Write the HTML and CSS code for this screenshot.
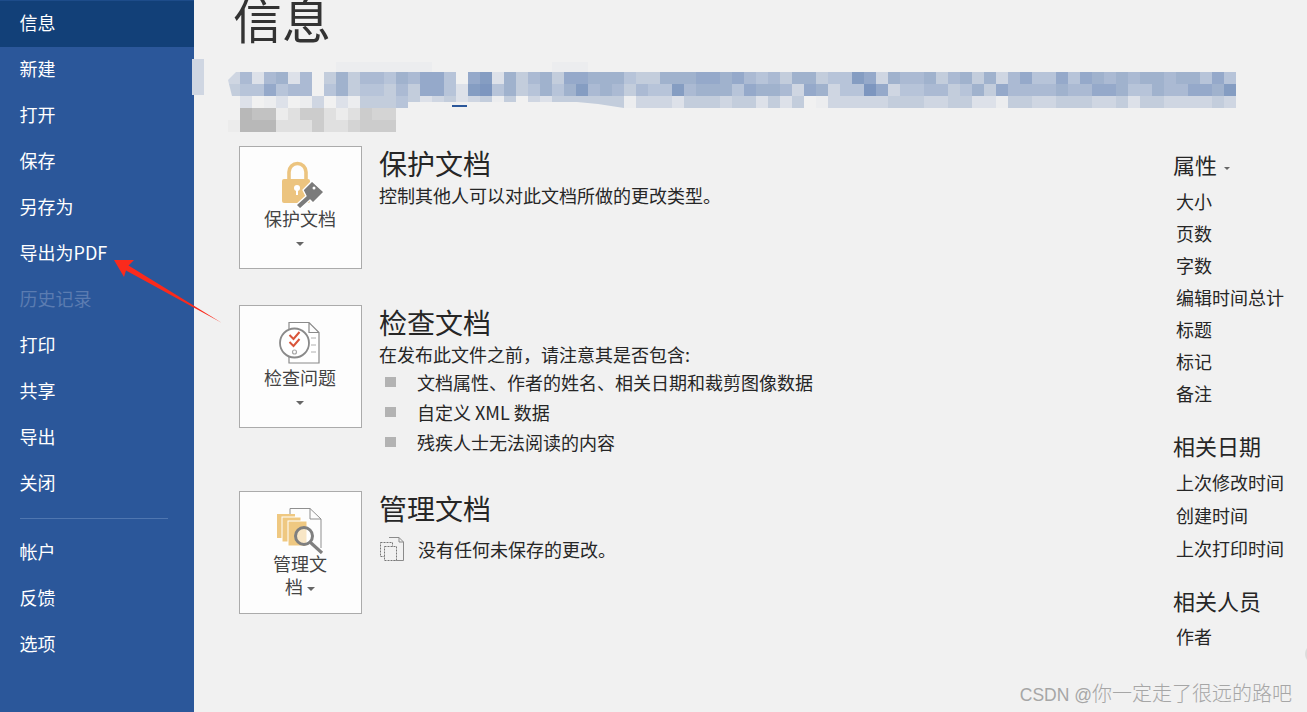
FILE: index.html
```html
<!DOCTYPE html>
<html lang="zh-CN">
<head>
    <meta charset="UTF-8">
    <title>信息</title>
    <link rel="stylesheet" href="styles.css">
</head>
<body>
    <nav class="sidebar">
        <a class="nav-item active">信息</a>
        <a class="nav-item">新建</a>
        <a class="nav-item">打开</a>
        <a class="nav-item">保存</a>
        <a class="nav-item">另存为</a>
        <a class="nav-item">导出为PDF</a>
        <a class="nav-item disabled">历史记录</a>
        <a class="nav-item">打印</a>
        <a class="nav-item">共享</a>
        <a class="nav-item">导出</a>
        <a class="nav-item">关闭</a>
        <div class="nav-divider"></div>
        <a class="nav-item">帐户</a>
        <a class="nav-item">反馈</a>
        <a class="nav-item">选项</a>
    </nav>

    <main class="content">
        <div class="back-tab"></div>
        <h1 class="page-title">信息</h1>

        <!-- pixelated file path -->
        <div class="mosaic" id="mosaic">
            <div class="mosaic-faint" data-rows="faint"></div>
            <div class="mosaic-blue" data-rows="blue"></div>
            <div class="mosaic-gray" data-rows="gray"></div>
            <div class="mosaic-cut"></div>
            <div class="path-link"></div>
        </div>

        <div class="columns">
            <div class="sections">
                <section class="section">
                    <div class="tile">
                        <svg class="tile-icon" viewBox="0 0 48 48">
                            <path d="M12 18V11a8.5 8.5 0 0 1 17 0V18" fill="none" stroke="#ecc47f" stroke-width="3.6"/>
                            <rect x="5" y="18" width="28" height="24" rx="2" fill="#ecc47f"/>
                            <circle cx="20" cy="27" r="3" fill="#fff"/>
                            <rect x="19" y="27" width="2" height="7" fill="#fff"/>
                            <path d="M35 20L47 31 36 42 33 39 23 48 19 44 29 35 26 29Z" fill="#7b7b7b" stroke="#fff" stroke-width="1.4" stroke-linejoin="round"/>
                            <circle cx="37" cy="27" r="1.5" fill="#fff"/>
                        </svg>
                        <div class="tile-label">保护文档<br><span class="caret"></span></div>
                    </div>
                    <div class="info">
                        <h2 class="info-title">保护文档</h2>
                        <p class="info-text">控制其他人可以对此文档所做的更改类型。</p>
                    </div>
                </section>

                <section class="section">
                    <div class="tile">
                        <svg class="tile-icon" viewBox="0 0 48 48">
                            <path d="M12 2.500H32L42 12.500V43H12Z M32 2.500V12.500H42" fill="#fff" stroke="#8a8a8a" stroke-width="1.200"/>
                            <path d="M34 18h5M34 25h5M34 32h5" stroke="#b0b0b0" stroke-width="1"/>
                            <circle cx="17.500" cy="23" r="14.500" fill="#fff" stroke="#8a8a8a" stroke-width="1.800"/>
                            <path d="M12.500 15l4 4 6-7M12.500 22l4 4 6-7" fill="none" stroke="#d9553a" stroke-width="2"/>
                            <circle cx="17.500" cy="32" r="2" fill="#fff" stroke="#a8a8a8" stroke-width="1.200"/>
                        </svg>
                        <div class="tile-label">检查问题<br><span class="caret"></span></div>
                    </div>
                    <div class="info">
                        <h2 class="info-title">检查文档</h2>
                        <p class="info-text">在发布此文件之前，请注意其是否包含:</p>
                        <ul class="bullets">
                            <li>文档属性、作者的姓名、相关日期和裁剪图像数据</li>
                            <li>自定义 XML 数据</li>
                            <li>残疾人士无法阅读的内容</li>
                        </ul>
                    </div>
                </section>

                <section class="section">
                    <div class="tile">
                        <svg class="tile-icon" viewBox="0 0 48 48">
                            <path d="M13 8V2.500H33L44 13V42" fill="none" stroke="#8f8f8f" stroke-width="1"/>
                            <path d="M33 2.500V13H44" fill="none" stroke="#8f8f8f" stroke-width="1"/>
                            <rect x="0" y="8" width="18" height="24" fill="#efc881"/>
                            <rect x="5" y="11" width="19" height="25" fill="#efc881" stroke="#fff" stroke-width="1"/>
                            <rect x="11" y="15" width="19" height="25" fill="#efc881" stroke="#fff" stroke-width="1"/>
                            <path d="M33.500 36.500L45 47" stroke="#7f7f7f" stroke-width="3.200"/>
                            <circle cx="27" cy="30" r="8.500" fill="#fff" fill-opacity=".55" stroke="#7f7f7f" stroke-width="3"/>
                        </svg>
                        <div class="tile-label">管理文<br>档 <span class="caret"></span></div>
                    </div>
                    <div class="info">
                        <h2 class="info-title">管理文档</h2>
                        <p class="info-text info-row">
                            <svg class="small-doc" viewBox="0 0 24 24">
                                <path d="M9 .500H19L23.500 5V23.500H13" fill="none" stroke="#8a8a8a" stroke-width="1"/>
                                <path d="M19 .500V5H23.500" fill="none" stroke="#8a8a8a" stroke-width="1"/>
                                <rect x=".500" y="5.500" width="12" height="14" fill="#f1f1f1" stroke="#777" stroke-width="1" stroke-dasharray="2 1"/>
                                <rect x="4.500" y="9.500" width="12" height="14" fill="#f1f1f1" stroke="#777" stroke-width="1" stroke-dasharray="2 1"/>
                            </svg>
                            没有任何未保存的更改。
                        </p>
                    </div>
                </section>
            </div>

            <aside class="props">
                <h3 class="props-title">属性 <span class="caret small"></span></h3>
                <div class="prop">大小</div>
                <div class="prop">页数</div>
                <div class="prop">字数</div>
                <div class="prop">编辑时间总计</div>
                <div class="prop">标题</div>
                <div class="prop">标记</div>
                <div class="prop">备注</div>
                <h3 class="props-title">相关日期</h3>
                <div class="prop tall">上次修改时间</div>
                <div class="prop tall">创建时间</div>
                <div class="prop tall">上次打印时间</div>
                <h3 class="props-title people">相关人员</h3>
                <div class="prop">作者</div>
            </aside>
        </div>

        <div class="edge-knob"></div>
        <div class="watermark"><span class="watermark-latin">CSDN @</span>你一定走了很远的路吧</div>
    </main>

    <!-- annotation arrow pointing at the PDF entry -->
    <svg class="arrow" viewBox="0 0 240 340">
        <path d="M114 260L134 260 128.500 265.500 222 323 126 270.500 124 277Z" fill="#fb2a1c"/>
    </svg>

    <script src="mosaic.js"></script>
</body>
</html>
```

FILE: styles.css
```css
* {
    box-sizing: border-box;
}
html, body {
    height: 100%;
}
body {
    margin: 0;
    display: flex;
    height: 712px;
    overflow: hidden;
    position: relative;
    background-color: #f1f1f1;
    color: #262626;
    font-family: "Noto Sans CJK SC", "Noto Sans", sans-serif;
    font-size: 18px;
}
.sidebar {
    width: 194px;
    flex-shrink: 0;
    background-color: #2b579a;
}
.nav-item {
    display: block;
    height: 46px;
    line-height: 44px;
    padding-left: 19.500px;
    color: #fff;
    font-size: 18px;
}
.nav-item.active {
    height: 47px;
    margin-bottom: -1px;
    background-color: #124078;
    border-top: 1px solid #1d4c8a;
    line-height: 43px;
}
.nav-item.disabled {
    color: #5b7cb1;
}
.nav-divider {
    height: 1px;
    margin: 12px 26px 10px 20px;
    background-color: #4f76b0;
}
.content {
    flex: 1;
    position: relative;
    padding-left: 40px;
}
.back-tab {
    position: absolute;
    left: -2px;
    top: 59px;
    width: 12px;
    height: 36px;
    background-color: #cfd6e2;
}
.page-title {
    margin: -14px 0 0 -1px;
    height: 64px;
    line-height: 64px;
    font-size: 49px;
    font-weight: 400;
    color: #333;
}
.mosaic {
    position: relative;
    margin: 12px 0 14px -6px;
    width: 1008px;
}
.mosaic-row {
    display: flex;
    height: 12px;
}
.mosaic-faint .mosaic-row {
    height: 10px;
}
.mosaic-blue {
    clip-path: polygon(8px 0, 100% 0, 100% 100%, 12px 100%, 12px 24px, 4px 24px, 0 8px);
}
.mosaic-cell {
    width: 12px;
    flex-shrink: 0;
}
.mosaic-cut {
    position: absolute;
    left: 180px;
    top: 40px;
    width: 220px;
    height: 6px;
    background-color: #f1f1f1;
    clip-path: polygon(0 0, 169px 0, 190px 2px, 216px 6px, 0 6px);
}
.path-link {
    position: absolute;
    left: 224px;
    top: 43px;
    width: 15px;
    height: 2px;
    background-color: #2b579a;
}
.columns {
    display: flex;
    justify-content: space-between;
}
.sections {
    padding-left: 5px;
}
.section {
    display: flex;
    gap: 17px;
    margin-bottom: 36px;
}
.tile {
    width: 123px;
    height: 123px;
    flex-shrink: 0;
    padding-top: 14px;
    border: 1px solid #ababab;
    background-color: #fdfdfd;
    text-align: center;
}
.tile-icon {
    display: block;
    width: 48px;
    height: 48px;
    margin: 0 auto;
}
.tile-label {
    margin: -2px 0 0 -1px;
    line-height: 23px;
    color: #444;
    font-size: 18px;
}
.caret {
    display: inline-block;
    width: 0;
    height: 0;
    vertical-align: middle;
    border-top: 4px solid #666;
    border-left: 4px solid transparent;
    border-right: 4px solid transparent;
}
.caret.small {
    margin-left: 2px;
    border-top-width: 3px;
    border-left-width: 3px;
    border-right-width: 3px;
}
.info {
    height: 123px;
}
.section:nth-child(2) .info {
    height: 150px;
}
.info-title {
    margin: 0 0 1px;
    height: 36px;
    line-height: 34px;
    font-size: 28px;
    font-weight: 400;
}
.info-text {
    margin: 0;
    line-height: 24px;
}
.info-row {
    display: flex;
    align-items: center;
    gap: 14px;
    margin-top: 10px;
}
.small-doc {
    width: 24px;
    height: 24px;
    margin-left: 1px;
}
.bullets {
    margin: 1px 0 0;
    padding: 0;
    list-style: none;
}
.bullets li {
    position: relative;
    height: 30px;
    line-height: 30px;
    padding-left: 38px;
}
.bullets li::before {
    content: "";
    position: absolute;
    left: 6px;
    top: 10px;
    width: 11px;
    height: 10px;
    background-color: #b3b3b3;
}
.props {
    width: 134px;
}
.props-title {
    margin: 18px 0 3px;
    height: 36px;
    line-height: 36px;
    font-size: 22px;
    font-weight: 400;
}
.props-title.people {
    margin-top: 17px;
    margin-bottom: 2px;
}
.prop {
    height: 32px;
    line-height: 32px;
    padding-left: 3px;
    white-space: nowrap;
}
.prop.tall {
    height: 33px;
}
.props-title:first-child {
    margin-top: 0;
}
.edge-knob {
    position: absolute;
    left: 1111px;
    top: 643px;
    width: 24px;
    height: 22px;
    border-radius: 50%;
    background-color: #dcdcdc;
}
.watermark {
    position: absolute;
    right: 15px;
    top: 680px;
    line-height: 26px;
    font-size: 20px;
    font-weight: 300;
    color: #a6a6a6;
    white-space: nowrap;
}
.watermark-latin {
    font-family: "Liberation Sans", sans-serif;
    font-size: 17.500px;
}
.arrow {
    position: absolute;
    left: 0;
    top: 0;
    width: 240px;
    height: 340px;
}
```

FILE: mosaic.js
```js
// colours of the pixelated path, one letter per 12px cell
const palette = {
    '0': 'transparent', '1': '#ecedef',
    a: '#dde1e9', b: '#cfd6e2', c: '#c3cddc', d: '#b7c4d9', e: '#abbad3',
    f: '#a0b2cd', g: '#95a9ca', h: '#859dc2', i: '#7d96bf',
    p: '#b8b8b8', q: '#c2c2c2', r: '#cccccc', s: '#d4d4d4', t: '#e0e0e0', u: '#ececec'
};

const rows = {
    faint: [
        '000000000111111110000000000111000000000000000000000000000000000000000000000000000000'
    ],
    blue: [
        'beaefae0cfceedfeggd0ghafcefcggfffdccfffggfge' + 'decffcddhgbfeefcefcfbegddgdgfefeffeffdgd',
        'cddgdee0dfcddcecggdahidfcdfdfhefecedd' + 'hefffdgf' + 'febgfbddigbddeecdfcgeeeefeeggfddfeeggfhf',
        '1a01a01b0a1cccdcabcabc1c0bacccccc1bbbacccbcc' + 'acac01bbbbbcccbbccaa1ccbbcccbbcaccbbbbcb'
    ],
    gray: [
        '0pqqutrrtutrss',
        'uppptttrttsrrr'
    ]
};

document.querySelectorAll('[data-rows]').forEach(function(group) {
    rows[group.dataset.rows].forEach(function(row) {
        const rowDiv = document.createElement('div');
        rowDiv.className = 'mosaic-row';
        for (const letter of row) {
            const cell = document.createElement('div');
            cell.className = 'mosaic-cell';
            cell.style.background = palette[letter];
            rowDiv.appendChild(cell);
        }
        group.appendChild(rowDiv);
    });
});
```
